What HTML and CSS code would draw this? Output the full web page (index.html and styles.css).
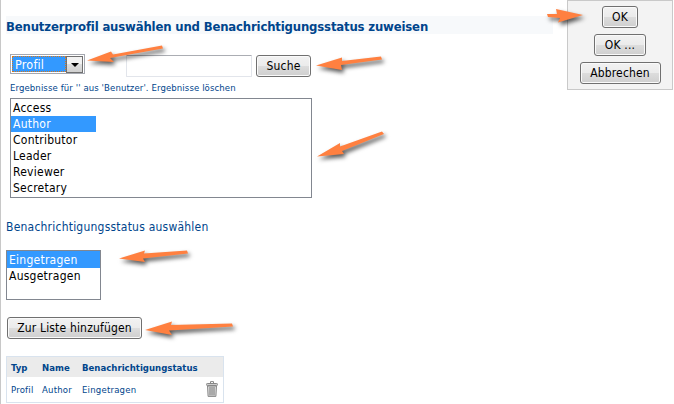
FILE: index.html
```html
<!DOCTYPE html>
<html lang="de">
<head>
<meta charset="utf-8">
<title>Benutzerprofil</title>
<link rel="stylesheet" href="styles.css">
</head>
<body>
<div class="page">
  <main class="content">
    <h1 class="title"><span>Benutzerprofil auswählen und Benachrichtigungsstatus zuweisen</span></h1>
    <div class="search">
      <div class="combo"><span class="combo-value">Profil</span><span class="combo-button"></span></div>
      <input class="query" type="text" aria-label="Suche">
      <button class="btn btn-search">Suche</button>
    </div>
    <p class="results">Ergebnisse für '' aus 'Benutzer'. Ergebnisse löschen</p>
    <ul class="list profiles">
      <li>Access</li>
      <li class="selected">Author</li>
      <li>Contributor</li>
      <li>Leader</li>
      <li>Reviewer</li>
      <li>Secretary</li>
    </ul>
    <h2 class="subtitle">Benachrichtigungsstatus auswählen</h2>
    <ul class="list states">
      <li class="selected">Eingetragen</li>
      <li>Ausgetragen</li>
    </ul>
    <button class="btn btn-add">Zur Liste hinzufügen</button>
    <div class="table">
      <div class="row head"><span>Typ</span><span>Name</span><span>Benachrichtigungstatus</span></div>
      <div class="row"><span>Profil</span><span>Author</span><span>Eingetragen</span>
        <svg class="trash" width="12" height="16" viewBox="0 0 12 16">
          <path d="M4.5 2V.6h3V2" fill="none" stroke="#888"/>
          <path d="M1.5 5h9l-.6 10.4H2.1z" fill="#ddd" stroke="#888"/>
          <path d="M4 6v8.500M6 6v8.500M8 6v8.500" stroke="#777"/>
          <rect x=".5" y="2.500" width="11" height="2" rx=".8" fill="#ccc" stroke="#888"/>
        </svg>
      </div>
    </div>
  </main>
  <aside class="actions">
    <button class="btn btn-ok">OK</button>
    <button class="btn btn-okmore">OK ...</button>
    <button class="btn btn-cancel">Abbrechen</button>
  </aside>
  <svg class="arrows" width="674" height="404" viewBox="0 0 674 404">
    <path d="M87 60.500L111 51.500L113 54.500L162 45.500L163 48.500L110 58L114 62Z"/>
    <path d="M316 65.500L342 57.500L342 61L381 56.500L382 59.500L341 65L342 70Z"/>
    <path d="M317 156.500L340 143L340 146.500L382 131.500L384 134L342 151L344 154Z"/>
    <path d="M119 258.500L145 250.500L144 253.500L187 250.500L188 253.500L143 258.500L145 262Z"/>
    <path d="M145 330L172 321.500L171 325L232 323.500L233 326.500L169 330.500L172 335Z"/>
    <path d="M547 14L557 14L556 9L583 15L558 22.500L560 18L548 17Z"/>
  </svg>
</div>
</body>
</html>
```
FILE: styles.css
```css
* { box-sizing: border-box; }
body { margin: 0; background: #fff; }
.page {
  position: relative;
  display: flex;
  align-items: flex-start;
  width: 674px;
  height: 404px;
  overflow: hidden;
  border-left: 1px solid #c8c8c8;
  font: 12px/16px "DejaVu Sans Condensed", "DejaVu Sans", sans-serif;
  color: #00458c;
}
.content { width: 547px; margin: 16px 19px 0 5px; white-space: nowrap; flex: none; }
.title {
  margin: 0;
  height: 18px;
  background: #f7f9fb;
  font-size: 13px;
  line-height: 21px;
  letter-spacing: -0.17px;
}
.search { display: flex; height: 23px; margin: 20px 0 0 4px; }
.combo { display: flex; width: 75px; height: 20px; border: 1px solid #a5a8b0; padding: 1px; }
.combo-value {
  width: 55px;
  height: 16px;
  padding-left: 2px;
  border: 1px dotted #d9771a;
  background: #39f;
  color: #fff;
  font-size: 12.5px;
  line-height: 16px;
  letter-spacing: 0.2px;
}
.combo-button {
  display: flex;
  align-items: center;
  justify-content: center;
  width: 17px;
  height: 17px;
  border: 1px solid #707070;
  background: linear-gradient(#f2f2f2 50%, #ddd 50%, #d0d0d0);
}
.combo-button::before { content: ""; border: 4px solid transparent; border-top-color: #000; border-bottom: 0; }
.query {
  width: 126px;
  height: 22px;
  margin: 1px 4px 0 41px;
  border: 1px solid #e2e5eb;
  border-top-color: #abadb3;
  border-radius: 1px;
  background: #fff;
}
.btn {
  display: block;
  height: 22px;
  padding: 0;
  border: 1px solid #707070;
  border-radius: 3px;
  background: linear-gradient(#f2f2f2, #ebebeb 50%, #ddd 50%, #cfcfcf);
  box-shadow: inset 0 0 0 1px #fafafa;
  color: #000;
  font: 12px/20px "DejaVu Sans Condensed", "DejaVu Sans", sans-serif;
  letter-spacing: 0.17px;
  white-space: nowrap;
}
.btn-search { width: 55px; margin-top: 1px; }
.results { margin: 4px 0 0 4px; font-size: 9.5px; line-height: 14px; letter-spacing: 0.1px; }
.list { margin: 0; padding: 0; list-style: none; border: 1px solid #828790; background: #fff; color: #000; }
.list li { height: 16px; padding-left: 2px; letter-spacing: 0.25px; }
.list .selected { background: #39f; color: #fff; }
.profiles { width: 302px; height: 100px; margin: 3px 0 0 4px; padding-top: 1px; }
.profiles .selected { width: 85px; }
.subtitle { margin: 20px 0 0; font-size: 12px; font-weight: normal; line-height: 18px; letter-spacing: 0.22px; }
.states { width: 95px; height: 50px; margin-top: 14px; }
.states .selected { height: 17px; line-height: 18px; }
.btn-add { width: 135px; margin: 17px 0 0 1px; }
.table { width: 218px; margin-top: 17px; border: 1px solid #d9e3ee; font-size: 9.5px; letter-spacing: 0.2px; }
.row { display: grid; grid-template-columns: 31px 40px 124px 12px; height: 25px; padding-left: 4px; line-height: 26px; }
.head { height: 20px; background: #ebebeb; font-weight: bold; line-height: 21px; letter-spacing: 0.02px; }
.trash { margin-top: 4px; }
.actions {
  display: flex;
  flex-direction: column;
  align-items: center;
  gap: 6px;
  width: 106px;
  height: 90px;
  padding-top: 5px;
  border: 1px solid #c9c9c9;
  background: #f3f3f3;
  margin-left: -5px;
}
.btn-ok { width: 36px; }
.btn-okmore { width: 52px; }
.btn-cancel { width: 81px; }
.arrows { position: absolute; left: -1px; top: 0; pointer-events: none; }
.arrows path { fill: #ff8040; filter: drop-shadow(2px 3px 2px rgba(0, 0, 0, .65)); }
```
